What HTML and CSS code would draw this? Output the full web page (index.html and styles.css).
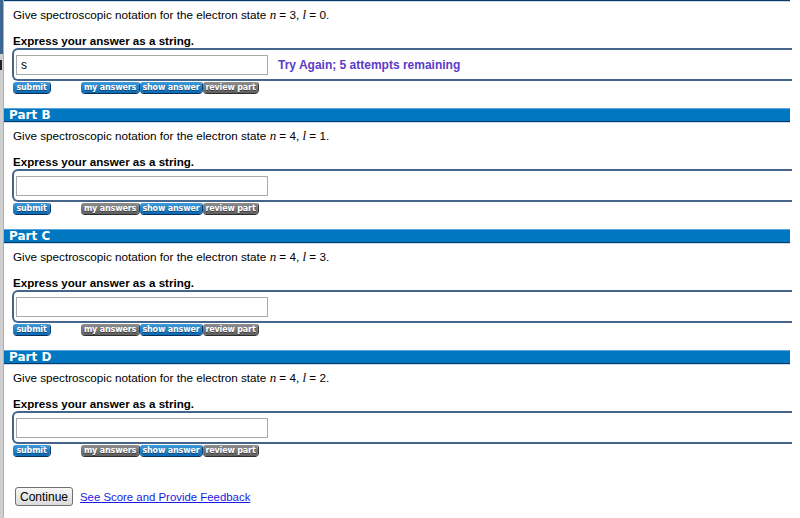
FILE: index.html
```html
<!DOCTYPE html>
<html>
<head>
<meta charset="utf-8">
<link rel="stylesheet" href="styles.css">
</head>
<body>
<div class="page">
  <div class="strip"><div class="strip-top"></div><div class="strip-mark"></div></div>
  <div class="main">
    <section class="part">
      <div class="part-head-edge"></div>
      <p class="q">Give spectroscopic notation for the electron state <i class="v">n</i> = 3, <i class="v">l</i> = 0.</p>
      <p class="express">Express your answer as a string.</p>
      <div class="answer-box"><input class="answer" type="text" value="s"><span class="feedback">Try Again; 5 attempts remaining</span></div>
      <div class="buttons">
        <span class="btn blue b-submit">submit</span>
        <span class="btn blue b-my">my answers</span>
        <span class="btn blue b-show">show answer</span>
        <span class="btn gray b-review">review part</span>
      </div>
    </section>
    <section class="part">
      <div class="part-head">Part B</div>
      <p class="q">Give spectroscopic notation for the electron state <i class="v">n</i> = 4, <i class="v">l</i> = 1.</p>
      <p class="express">Express your answer as a string.</p>
      <div class="answer-box"><input class="answer" type="text"></div>
      <div class="buttons">
        <span class="btn blue b-submit">submit</span>
        <span class="btn gray b-my">my answers</span>
        <span class="btn blue b-show">show answer</span>
        <span class="btn gray b-review">review part</span>
      </div>
    </section>
    <section class="part">
      <div class="part-head">Part C</div>
      <p class="q">Give spectroscopic notation for the electron state <i class="v">n</i> = 4, <i class="v">l</i> = 3.</p>
      <p class="express">Express your answer as a string.</p>
      <div class="answer-box"><input class="answer" type="text"></div>
      <div class="buttons">
        <span class="btn blue b-submit">submit</span>
        <span class="btn gray b-my">my answers</span>
        <span class="btn blue b-show">show answer</span>
        <span class="btn gray b-review">review part</span>
      </div>
    </section>
    <section class="part">
      <div class="part-head">Part D</div>
      <p class="q">Give spectroscopic notation for the electron state <i class="v">n</i> = 4, <i class="v">l</i> = 2.</p>
      <p class="express">Express your answer as a string.</p>
      <div class="answer-box"><input class="answer" type="text"></div>
      <div class="buttons">
        <span class="btn blue b-submit">submit</span>
        <span class="btn gray b-my">my answers</span>
        <span class="btn blue b-show">show answer</span>
        <span class="btn gray b-review">review part</span>
      </div>
    </section>
    <div class="footer">
      <button class="continue">Continue</button>
      <a class="feedback-link" href="#">See Score and Provide Feedback</a>
    </div>
  </div>
</div>
</body>
</html>
```

FILE: styles.css
```css
html, body {
  margin: 0;
  padding: 0;
  background: #ffffff;
  overflow: hidden;
}
body {
  font-family: "Liberation Sans", Arial, sans-serif;
  font-size: 12px;
  color: #000;
}
.page {
  display: flex;
  height: 518px;
  overflow: hidden;
}
.strip {
  width: 3px;
  flex: none;
  background: #cfcfcf;
  border-right: 1px solid #b0b0b0;
}
.strip-top {
  height: 54px;
  background: #3f6690;
}
.strip-mark {
  margin-top: 6px;
  height: 10px;
  width: 2px;
  background: #222;
}
.main {
  width: 786px;
}
.part {
  margin-bottom: 14px;
}
.part-head-edge {
  height: 0;
  border-bottom: 1px solid #0b3a68;
  box-shadow: 0 1px 0 #c9dbea;
}
.part-head {
  height: 12px;
  line-height: 12px;
  border-top: 1px solid #5ba6de;
  border-bottom: 1px solid #0b3a68;
  box-shadow: 0 1px 0 #c9dbea;
  background: #0077c0;
  color: #fff;
  font-family: "DejaVu Sans", Verdana, sans-serif;
  font-weight: bold;
  font-size: 12px;
  padding-left: 5px;
}
.q {
  margin: 7px 0 0 9px;
  line-height: 14px;
  height: 14px;
  font-size: 11.7px;
}
.v {
  font-family: "Liberation Serif", "Times New Roman", serif;
  font-size: 13px;
}
.express {
  margin: 12px 0 0 9px;
  line-height: 14px;
  height: 14px;
  font-weight: bold;
  font-size: 11.6px;
}
.answer-box {
  margin-left: 8px;
  width: 776px;
  height: 24px;
  border: 2px solid #45658a;
  border-right: none;
  border-radius: 6px 0 0 6px;
  display: flex;
  align-items: flex-start;
  padding: 5px 0 0 2px;
  box-sizing: content-box;
}
.answer {
  width: 252px;
  height: 20px;
  box-sizing: border-box;
  border: 1px solid #a9a9a9;
  padding: 1px 4px;
  margin: 0;
  font-family: "Liberation Sans", Arial, sans-serif;
  font-size: 12px;
}
.feedback {
  margin-left: 10px;
  line-height: 20px;
  font-weight: bold;
  color: #5a3cc8;
}
.buttons {
  display: flex;
  margin: 1px 0 0 9px;
  height: 12px;
}
.btn {
  display: inline-block;
  height: 11px;
  line-height: 11px;
  font-family: "DejaVu Sans", Verdana, sans-serif;
  font-size: 8px;
  letter-spacing: -0.15px;
  font-weight: bold;
  color: #fff;
  text-align: center;
  border-radius: 3px 3px 3px 4px;
  text-shadow: 0 1px 0 rgba(0,0,0,0.45);
  margin-right: 1px;
  white-space: nowrap;
  overflow: hidden;
}
.blue {
  background: linear-gradient(#3f9ad9, #0a69b3);
  box-shadow: 0 1px 0 #0a2f5a, 1px 0 0 #0d3c6e;
}
.gray {
  background: linear-gradient(#8e8e8e, #5f5f5f);
  box-shadow: 0 1px 0 #2e2e2e, 1px 0 0 #3a3a3a;
}
.b-submit { width: 37px; margin-right: 31px; }
.b-my { width: 58px; }
.b-show { width: 62px; }
.b-review { width: 55px; }
.footer {
  display: flex;
  align-items: center;
  margin: 30px 0 0 11px;
}
.continue {
  width: 58px;
  height: 19px;
  padding: 0;
  font-family: "Liberation Sans", Arial, sans-serif;
  font-size: 12px;
  color: #000;
  background: linear-gradient(#f7f7f7, #dadada);
  border: 1px solid #707070;
  border-radius: 3px;
}
.feedback-link {
  margin-left: 7px;
  color: #1a1ae6;
  text-decoration: underline;
  font-size: 11.4px;
}
```
